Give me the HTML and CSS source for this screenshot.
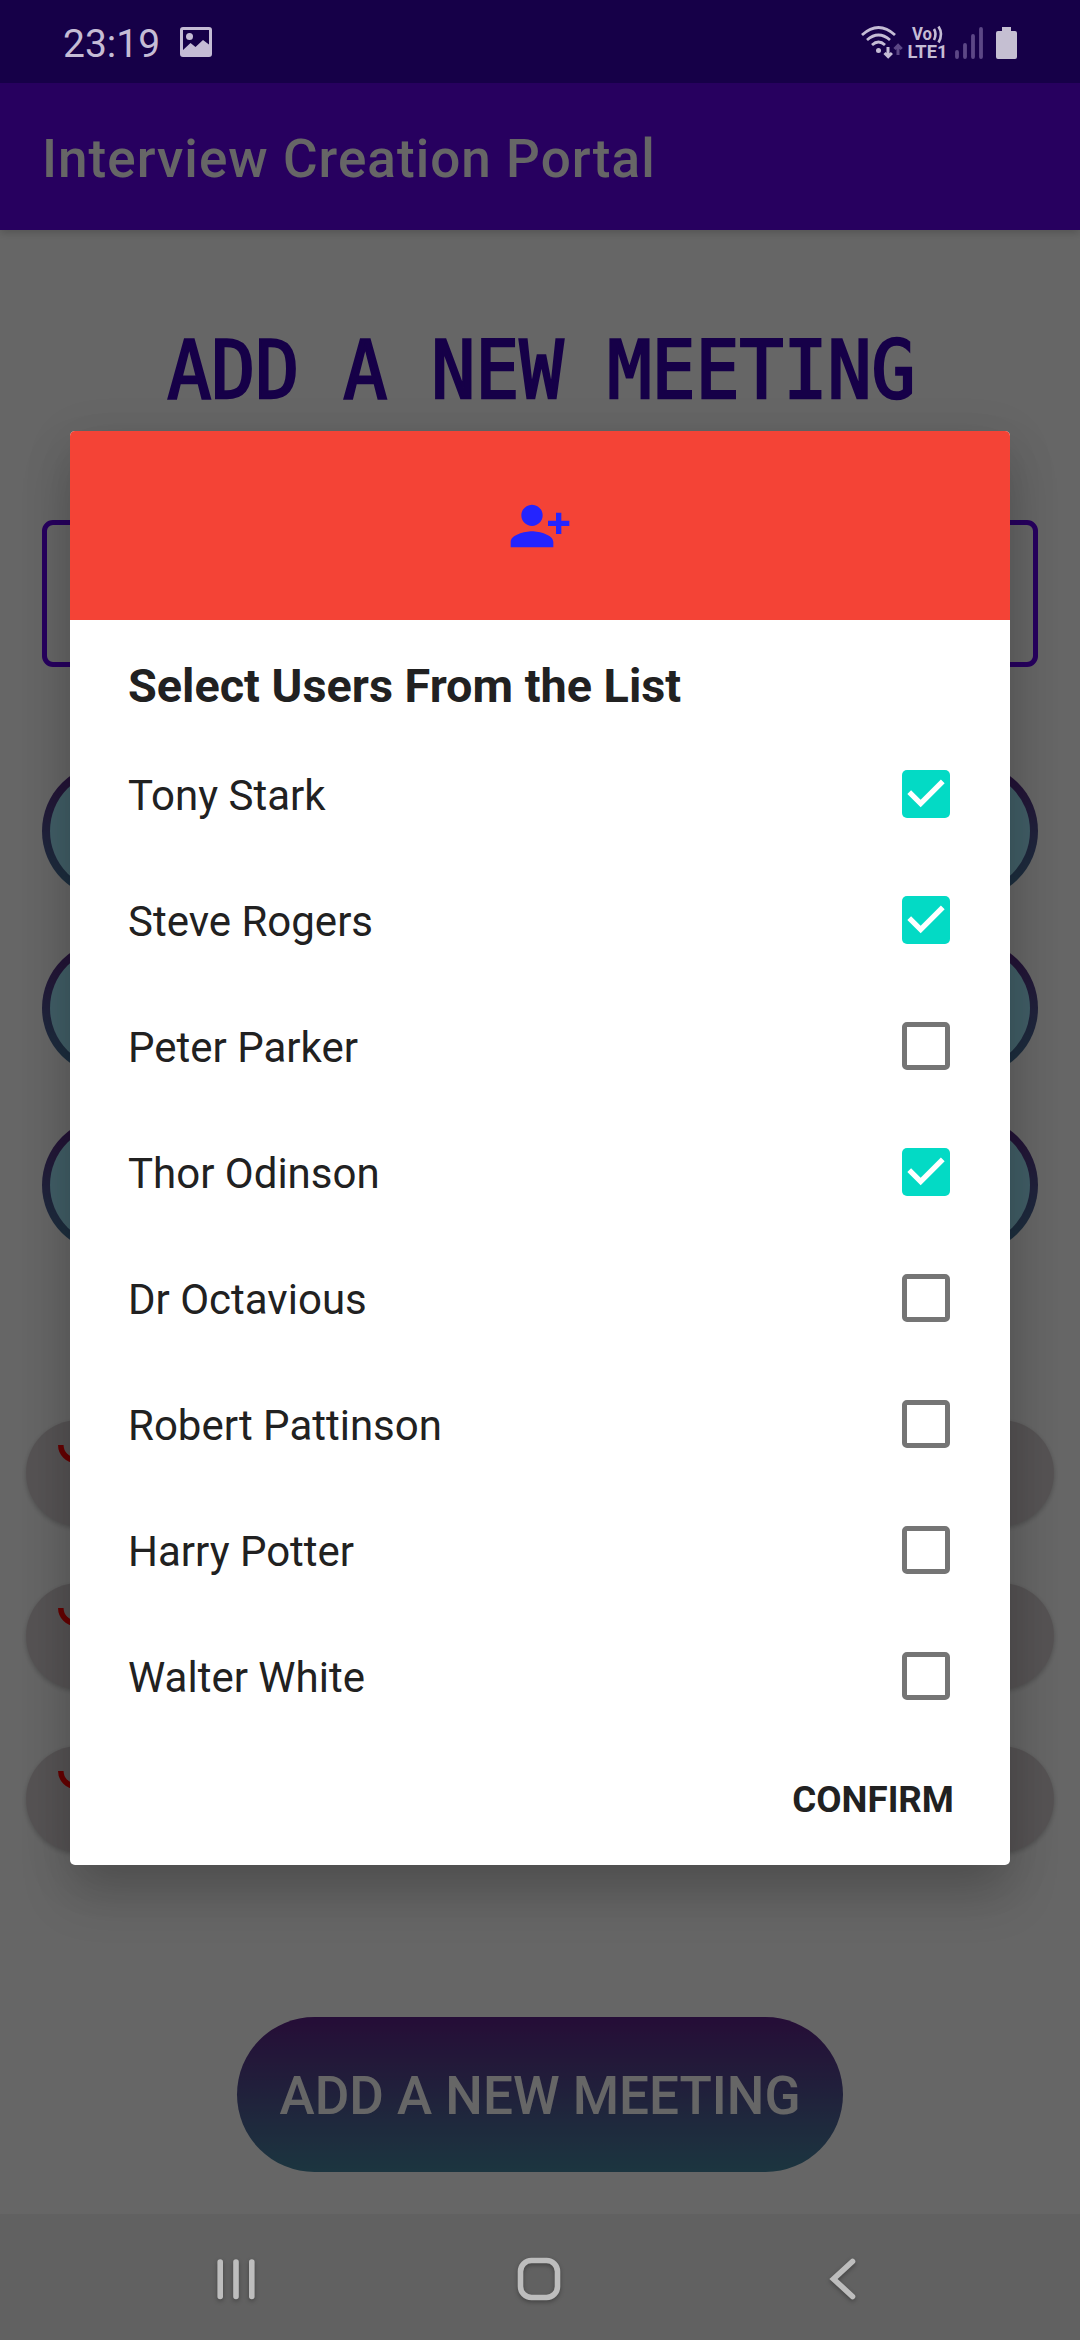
FILE: index.html
```html
<!DOCTYPE html>
<html lang="en">
<head>
<meta charset="utf-8">
<title>Interview Creation Portal</title>
<link rel="stylesheet" href="styles.css">
</head>
<body>
<div class="screen">
  <div class="app">
    <header class="appbar"><h1 class="appbar-title">Interview Creation Portal</h1></header>
    <main class="content">
      <h2 class="heading"><span class="heading-text">ADD A NEW MEETING</span></h2>
      <div class="field"></div>
      <div class="pickers">
        <div class="picker"></div>
        <div class="picker"></div>
        <div class="picker"></div>
      </div>
      <div class="cards">
        <div class="card"><svg class="card-icon" viewBox="0 0 36 18"><path d="M2.8 0a15.2 15.2 0 0 0 30.4 0"/></svg></div>
        <div class="card"><svg class="card-icon" viewBox="0 0 36 18"><path d="M2.8 0a15.2 15.2 0 0 0 30.4 0"/></svg></div>
        <div class="card"><svg class="card-icon" viewBox="0 0 36 18"><path d="M2.8 0a15.2 15.2 0 0 0 30.4 0"/></svg></div>
      </div>
      <button class="submit">ADD A NEW MEETING</button>
    </main>
  </div>

  <div class="overlay">
    <div class="status">
      <span class="clock">23:19</span>
      <svg class="picture" width="32" height="30" viewBox="0 0 32 30"><path fill-rule="evenodd" d="M3 0h26a3 3 0 0 1 3 3v24a3 3 0 0 1-3 3H3a3 3 0 0 1-3-3V3a3 3 0 0 1 3-3zM3 3v20l7.500-7 5 4L23 13l6 4.500V3z"/><circle cx="9.500" cy="9.500" r="3.500"/></svg>
      <svg class="signals" width="160" height="40" viewBox="0 0 160 40">
        <g fill="none" stroke="#c5bcd5" stroke-width="2.800">
          <path d="M2 14q16.500-15 33 0M7 19q11.500-10 23 0M12 24q6.500-6 13 0"/>
          <path d="M28 26v9M24.500 32l3.700 3.700 3.700-3.700" stroke-width="3"/>
          <path d="M38 34v-9M34.500 28l3.600-3.700 3.600 3.700" stroke="#5c4786" stroke-width="3"/>
          <path d="M74 8q3 5 0 11M78.500 5.500q5 7.500 0 16" stroke-width="2.600"/>
        </g>
        <circle cx="18.500" cy="29.500" r="2.500" fill="#c5bcd5"/>
        <text class="volte" x="52" y="19" textLength="20" lengthAdjust="spacingAndGlyphs">Vo</text>
        <text class="volte" x="47.500" y="37" textLength="40" lengthAdjust="spacingAndGlyphs">LTE1</text>
        <path d="M97 36v-5M105 36V24M113 36V15M121 36V8" stroke="#5c4786" stroke-width="3.800" stroke-linecap="round" fill="none"/>
        <path d="M142 6h9v4h4a2 2 0 0 1 2 2v24a2 2 0 0 1-2 2h-17a2 2 0 0 1-2-2V12a2 2 0 0 1 2-2h4z" fill="#c5bfd2"/>
      </svg>
    </div>

    <section class="dialog">
      <div class="banner"><svg width="64" height="64" viewBox="0 0 24 24"><path d="M13 8c0-2.210-1.790-4-4-4S5 5.790 5 8s1.790 4 4 4 4-1.790 4-4zm2 2v2h3v3h2v-3h3v-2h-3V7h-2v3zM1 18v2h16v-2c0-2.660-5.330-4-8-4s-8 1.340-8 4z" fill="#2424ff"/></svg></div>
      <h3 class="dialog-title">Select Users From the List</h3>
      <ul class="users">
        <li class="user"><span class="name">Tony Stark</span><i class="box checked"><svg viewBox="3 3 18 18"><path d="M10 17l-5-5 1.410-1.410L10 14.170l7.590-7.590L19 8z"/></svg></i></li>
        <li class="user"><span class="name">Steve Rogers</span><i class="box checked"><svg viewBox="3 3 18 18"><path d="M10 17l-5-5 1.410-1.410L10 14.170l7.590-7.590L19 8z"/></svg></i></li>
        <li class="user"><span class="name">Peter Parker</span><i class="box"></i></li>
        <li class="user"><span class="name">Thor Odinson</span><i class="box checked"><svg viewBox="3 3 18 18"><path d="M10 17l-5-5 1.410-1.410L10 14.170l7.590-7.590L19 8z"/></svg></i></li>
        <li class="user"><span class="name">Dr Octavious</span><i class="box"></i></li>
        <li class="user"><span class="name">Robert Pattinson</span><i class="box"></i></li>
        <li class="user"><span class="name">Harry Potter</span><i class="box"></i></li>
        <li class="user"><span class="name">Walter White</span><i class="box"></i></li>
      </ul>
      <div class="actions"><button class="confirm">CONFIRM</button></div>
    </section>

    <nav class="navbar">
      <svg class="nav-icon" width="50" height="50" viewBox="0 0 50 50"><path d="M9.200 8v34.500M25 8v34.500M40.800 8v34.500"/></svg>
      <svg class="nav-icon" width="50" height="50" viewBox="0 0 50 50"><rect x="6.500" y="6.500" width="37" height="37" rx="11"/></svg>
      <svg class="nav-icon" width="50" height="50" viewBox="0 0 50 50"><path d="M35.500 7.500L16.500 25l19 17.500"/></svg>
    </nav>
  </div>
</div>
</body>
</html>
```
FILE: styles.css
```css
* { box-sizing: border-box; }

body {
  margin: 0;
  font-family: Roboto, "Liberation Sans", sans-serif;
}

h1, h2, h3, ul { margin: 0; padding: 0; }
button { border: 0; font-family: inherit; }

.screen {
  position: relative;
  width: 1080px;
  height: 2340px;
  overflow: hidden;
  background: #fff;
}

.app {
  height: 100%;
  display: flex;
  flex-direction: column;
  padding-top: 83px;
  background: linear-gradient(#3700b3 83px, #fff 83px);
}

.appbar {
  height: 147px;
  flex: none;
  display: flex;
  align-items: center;
  padding: 5px 42px 0;
  background: #6200ee;
  box-shadow: 0 3px 8px rgba(0, 0, 0, 0.18);
  clip-path: inset(0 0 -20px 0);
}

.appbar-title {
  color: #fff;
  font-size: 53px;
  font-weight: 500;
  letter-spacing: 1.05px;
  white-space: nowrap;
}

.content {
  display: flex;
  flex-direction: column;
  align-items: center;
}

.heading {
  height: 290px;
  padding: 90px 0 0 3px;
  color: #3700b3;
  font-family: "DejaVu Sans Mono", monospace;
  font-weight: 400;
  font-size: 80px;
  line-height: 101px;
  white-space: nowrap;
}

.heading-text {
  display: inline-block;
  transform: scaleX(0.914);
  -webkit-text-stroke: 2.5px #3700b3;
}

.field {
  width: 996px;
  height: 147px;
  border: 5px solid #6200ee;
  border-radius: 11px;
}

.pickers {
  display: flex;
  flex-direction: column;
  gap: 41px;
  margin-top: 96px;
}

.picker {
  width: 996px;
  height: 136px;
  border: 8px solid transparent;
  border-radius: 68px;
  background:
    linear-gradient(#a3eafe, #a3eafe) padding-box,
    linear-gradient(#5c2385, #4682a0) border-box;
}

.cards {
  display: flex;
  flex-direction: column;
  gap: 57px;
  margin-top: 167px;
}

.card {
  width: 1028px;
  height: 106px;
  padding: 25px 32px;
  border-radius: 53px;
  background: #d8cfd2;
  box-shadow: 0 2px 5px rgba(0, 0, 0, 0.22);
}

.card-icon {
  display: block;
  width: 36px;
  height: 18px;
  fill: none;
  stroke: #ff0000;
  stroke-width: 5.5px;
}

.submit {
  width: 606px;
  height: 155px;
  margin-top: 165px;
  padding: 3px 0 0;
  border-radius: 78px;
  background: linear-gradient(#5e2189, #4686a0);
  color: #fff;
  font-size: 53px;
  font-weight: 500;
  white-space: nowrap;
}

/* Everything above the dimmed activity */
.overlay {
  position: absolute;
  inset: 0;
  display: flex;
  flex-direction: column;
  align-items: center;
  background: rgba(0, 0, 0, 0.6);
}

.status {
  width: 100%;
  height: 83px;
  flex: none;
  display: flex;
  align-items: center;
  padding: 0 63px;
  color: #c5bcd5;
}

.clock {
  width: 117px;
  padding-top: 4px;
  font-size: 39px;
}

.picture { fill: #c5bcd5; }

.signals {
  margin: -1px -3px 0 auto;
}

.volte {
  fill: #c5bcd5;
  font-size: 18px;
  font-weight: 700;
}

.dialog {
  width: 940px;
  height: 1434px;
  margin-top: 348px;
  flex: none;
  display: flex;
  flex-direction: column;
  overflow: hidden;
  border-radius: 5px;
  background: #fff;
  color: #212121;
  box-shadow: 0 30px 50px rgba(0, 0, 0, 0.17), 0 10px 50px rgba(0, 0, 0, 0.1);
}

.banner {
  height: 189px;
  flex: none;
  display: flex;
  align-items: center;
  justify-content: center;
  background: #f44336;
}

.dialog-title {
  height: 111px;
  padding: 38px 58px 0;
  font-size: 46.8px;
  font-weight: 700;
  line-height: 56px;
  white-space: nowrap;
}

.users { list-style: none; }

.user {
  height: 126px;
  display: flex;
  align-items: center;
  justify-content: space-between;
  padding: 0 60px 0 58px;
  font-size: 42px;
}

.name { padding-top: 2px; }

.box {
  width: 48px;
  height: 48px;
  border: 5.3px solid #757575;
  border-radius: 5px;
}

.box.checked {
  border: 0;
  background: #03dac5;
}

.box svg {
  display: block;
  fill: #fff;
}

.actions {
  flex: 1;
  display: flex;
  justify-content: flex-end;
  padding: 0 56px;
}

.confirm {
  height: 120px;
  padding: 0;
  background: none;
  color: #212121;
  font-size: 36.7px;
  font-weight: 700;
}

.navbar {
  width: 100%;
  height: 126px;
  margin-top: auto;
  flex: none;
  display: flex;
  align-items: center;
  justify-content: space-between;
  padding: 4px 213px 0 211px;
  background: #616161;
}

.nav-icon {
  fill: none;
  stroke: #bdbdbd;
  stroke-width: 5.6px;
  stroke-linecap: round;
  filter: drop-shadow(0 2px 2px rgba(0, 0, 0, 0.3));
}
```
